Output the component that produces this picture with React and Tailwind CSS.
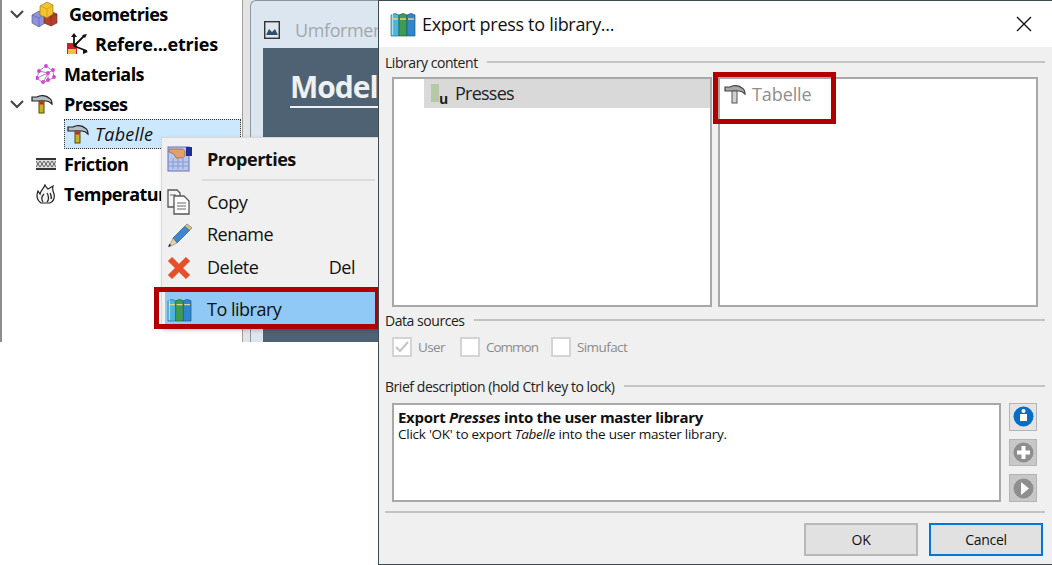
const FONT = { fontFamily: '"Open Sans", "Noto Sans", sans-serif' };

function Chevron() {
  return (
    <svg width="14" height="9" viewBox="0 0 14 9" fill="none" stroke="#444" strokeWidth="2">
      <path d="M1 1l6 6 6-6" />
    </svg>
  );
}

function Cubes() {
  return (
    <svg width="27" height="27" viewBox="0 0 27 27" className="block">
      <path d="M1 14l7-4 6 3v9l-6 4-7-4z" fill="#8f92e0" stroke="#555" strokeWidth=".6" />
      <path d="M1 14l7 3 6-4M8 17v9" fill="none" stroke="#5a5ca8" strokeWidth=".6" />
      <path d="M13 13l6-3 7 3v9l-6 3-7-3z" fill="#b5402c" stroke="#5a2a20" strokeWidth=".6" />
      <path d="M13 13l7 3 6-3M20 16v9" fill="none" stroke="#7a2a1c" strokeWidth=".6" />
      <path d="M9 5l7-4 6 3v9l-6 4-7-3z" fill="#f4c430" stroke="#8a6d10" strokeWidth=".6" />
      <path d="M9 5l7 3 6-4M16 8v9" fill="none" stroke="#c99a10" strokeWidth=".7" />
    </svg>
  );
}

function Axes() {
  return (
    <svg width="22" height="22" viewBox="0 0 22 22" className="block">
      <rect x="1" y="10" width="10" height="11" fill="#c8232c" />
      <rect x="2" y="16" width="8" height="5" fill="#e8c832" />
      <path d="M8 13L18 3M8 13V2M8 13l13 5" stroke="#111" strokeWidth="1.8" fill="none" />
      <path d="M8 0l-3 4h6zM21 1l-5 1 3 3zM22 19l-5-3v5z" fill="#111" />
    </svg>
  );
}

function Molecule() {
  return (
    <svg width="20" height="20" viewBox="0 0 20 20" className="block">
      <path d="M10 2L3 7 1 14l6 5 5-3 6-2-1-7zM3 7l9 2 5-3M12 9l-5 10M12 9v7M1 14l11-5" fill="none" stroke="#9a7aa8" strokeWidth=".9" />
      {[[10, 2], [3, 7], [17, 6], [12, 9], [1, 14], [7, 18], [12, 16], [18, 13]].map(([x, y], i) => (
        <circle key={i} cx={x} cy={y} r="1.9" fill="#d63fd6" />
      ))}
    </svg>
  );
}

function Hammer({ gray }) {
  return (
    <svg width="22" height="19" viewBox="0 0 22 19" className="block">
      <path d="M1 2h5c3-2 9-2 12 1 2 1 3 4 3 6-2-2-4-3-6-3H1z" fill={gray ? '#a8a8a8' : '#b4bec8'} stroke={gray ? '#444' : '#222'} strokeWidth="1.2" />
      <rect x="8" y="6" width="5" height="12" fill={gray ? '#d0d0d0' : '#c9b21e'} stroke={gray ? '#555' : '#4a4a10'} strokeWidth="1" />
      {!gray && <rect x="8.500" y="6.500" width="4" height="3" fill="#c8232c" />}
    </svg>
  );
}

function Friction() {
  return (
    <svg width="20" height="12" viewBox="0 0 20 12" className="block">
      <rect x="0" y="0" width="20" height="2" fill="#333" />
      <rect x="0" y="10" width="20" height="2" fill="#333" />
      <rect x="0" y="2" width="20" height="8" fill="#ddd" />
      <path d="M0 3l2 3 2-3 2 3 2-3 2 3 2-3 2 3 2-3 2 3 2-3M0 9l2-3 2 3 2-3 2 3 2-3 2 3 2-3 2 3 2-3 2 3" stroke="#444" strokeWidth=".8" fill="none" />
    </svg>
  );
}

function Flame() {
  return (
    <svg width="20" height="20" viewBox="0 0 20 20" fill="#f4f4f4" stroke="#222" strokeWidth="1.2" className="block">
      <path d="M5 19C1 16 0 12 2 7l2 3c1-4 4-6 5-9 1 2 2 3 3 4l5-3c-1 3 0 5 1 8 1 4-1 8-4 9z" />
      <path d="M7 18c-2-3-1-6 1-8M11 18c2-2 2-6 0-9M15 15c1-2 0-4-1-6" fill="none" />
    </svg>
  );
}

function Books({ size = 26 }) {
  return (
    <svg width={size} height={size} viewBox="0 0 26 26" className="block">
      <path d="M1 4q4-3 8 0v21H1z" fill="#4fb4dc" stroke="#1f6e9a" strokeWidth=".7" />
      <path d="M9 4q4-3 8 0v21H9z" fill="#3f9a55" stroke="#20673a" strokeWidth=".7" />
      <path d="M17 4q4-3 8 0v21h-8z" fill="#2f86cc" stroke="#1a5a94" strokeWidth=".7" />
      <path d="M2.500 3v21" stroke="#a8e0f0" strokeWidth="1.400" />
      <path d="M2 8h6M10 8h6M18 8h6" stroke="#e8d67a" strokeWidth="1.4" />
    </svg>
  );
}

function HandDoc() {
  return (
    <svg width="26" height="26" viewBox="0 0 26 26" className="block">
      <rect x="1" y="1" width="21" height="24" fill="#b8c8ec" stroke="#6a6fb8" strokeWidth="1" />
      <path d="M6 12v11M11 12v11M16 12v11M2 16h19M2 20h19" stroke="#8a9ad0" strokeWidth="1" />
      <path d="M2 3h12c2 0 4 1 4 3v3c0 2-2 3-4 3H9L7 8 2 6z" fill="#e0a070" stroke="#8a5a30" strokeWidth=".6" />
      <rect x="19" y="1" width="6" height="9" fill="#1c2f9c" />
    </svg>
  );
}

function CopyIcon() {
  return (
    <svg width="24" height="26" viewBox="0 0 24 26" fill="#f5f5f5" stroke="#555" strokeWidth="1.3" className="block">
      <path d="M1 1h9l3 3v14H1z" />
      <path d="M7 7h10l5 5v13H7z" fill="#fff" />
      <path d="M10 14h9M10 17h9M10 20h9M3 6h6" fill="none" strokeWidth=".9" />
    </svg>
  );
}

function Pencil() {
  return (
    <svg width="26" height="26" viewBox="0 0 26 26" className="block">
      <path d="M6 16L20 2l5 4-15 15z" fill="#3f86cc" stroke="#1e5a94" strokeWidth=".7" />
      <path d="M20 2l5 4-2 2-5-4z" fill="#e8c060" />
      <path d="M6 16l4 5-8 4z" fill="#e8d0a8" stroke="#666" strokeWidth=".5" />
      <path d="M1 25l3-1.500-1.500-2z" fill="#222" />
    </svg>
  );
}

function RedX() {
  return (
    <svg width="24" height="24" viewBox="0 0 24 24" fill="none" stroke="#e5502a" strokeWidth="6" className="block">
      <path d="M3 3l18 18M21 3L3 21" />
    </svg>
  );
}

function RoundBtn({ color, children, disabled }) {
  return (
    <div className={`w-[28px] h-[28px] flex items-center justify-center border border-[#b4b4b4] ${disabled ? 'bg-[#c8c8c8]' : 'bg-[#e4e4e4]'}`}>
      <svg width="21" height="21" viewBox="0 0 21 21">
        <circle cx="10.5" cy="10.5" r="10" fill={color} />
        {children}
      </svg>
    </div>
  );
}

function TreeRow({ indent, chevron, icon, label, labelClass = 'tracking-[-0.6px]' }) {
  return (
    <div className="h-[30px] flex items-center whitespace-nowrap" style={{ paddingLeft: indent }}>
      {chevron && <span className="w-[21px] flex items-center"><Chevron /></span>}
      {icon}
      <span className={`font-bold text-[18px] text-black ${labelClass}`}>{label}</span>
    </div>
  );
}

function SectionTitle({ title }) {
  return (
    <div className="flex items-center gap-[9px] h-[16px] text-[14px] text-[#222] tracking-[-0.45px] whitespace-nowrap">
      <span>{title}</span>
      <span className="flex-1 h-[2px] bg-[#c4c4c4]" />
    </div>
  );
}

function Check({ label, checked, className, labelClass = 'tracking-[-0.6px]' }) {
  return (
    <div className={`flex items-center gap-[6px] text-[13.5px] text-[#8c8c8c] ${className}`}>
      <span className="w-[20px] h-[20px] bg-white border-2 border-[#d4d4d4] flex items-center justify-center">
        {checked && (
          <svg width="14" height="12" viewBox="0 0 14 12" fill="none" stroke="#c4c4c4" strokeWidth="2">
            <path d="M1 6l4 4 8-9" />
          </svg>
        )}
      </span>
      <span className={labelClass}>{label}</span>
    </div>
  );
}

function MenuItem({ icon, label, shortcut, bold, className }) {
  return (
    <div className={`flex items-center text-[18px] tracking-[-0.5px] text-[#111] ${className}`}>
      <span className="w-[40px] flex items-center">{icon}</span>
      <span className={`flex-1 ${bold ? 'font-bold' : ''}`}>{label}</span>
      {shortcut && <span className="mr-[24px]">{shortcut}</span>}
    </div>
  );
}

function App() {
  return (
    <div style={FONT} className="relative w-[1052px] h-[565px] bg-white overflow-hidden flex items-start">
      {/* model tree and window behind the dialog */}
      <div className="relative w-[378px] h-[342px] flex shrink-0">
        <div className="w-[243px] h-full border-l-2 border-r border-l-[#8e8e8e] border-r-[#a0a0a0] bg-white">
          <div className="-mt-px">
            <TreeRow indent={8} chevron icon={<span className="w-[38px]"><Cubes /></span>} label="Geometries" labelClass="tracking-[-0.55px]" />
            <TreeRow indent={64} icon={<span className="w-[29px]"><Axes /></span>} label="Refere...etries" labelClass="tracking-[-0.2px]" />
            <TreeRow indent={34} icon={<span className="w-[28px]"><Molecule /></span>} label="Materials" />
            <TreeRow indent={8} chevron icon={<span className="w-[33px]"><Hammer /></span>} label="Presses" />
            <div className="ml-[62px] w-[177px] h-[30px] bg-[#cce8ff] border border-dotted border-[#333] flex items-center pl-[2px]">
              <span className="w-[28px]"><Hammer /></span>
              <span className="italic text-[18px] tracking-[0.25px] text-[#111]">Tabelle</span>
            </div>
            <TreeRow indent={34} icon={<span className="w-[28px]"><Friction /></span>} label="Friction" />
            <TreeRow indent={34} icon={<span className="w-[28px]"><Flame /></span>} label="Temperature" />
          </div>
        </div>

        <div className="flex-1 min-w-0 h-full bg-[#e4e4e4] pl-[7px]">
          <div className="h-full rounded-tl-[6px] border-l border-t border-[#8a97a3] bg-[#dbe6f0] pl-[12px] overflow-hidden">
            <div className="h-[47px] flex items-center gap-[15px] pt-[11px] pl-px whitespace-nowrap">
              <svg width="16" height="18" viewBox="0 0 16 18" className="shrink-0">
                <rect x=".7" y=".7" width="14.600" height="16.600" fill="#dfe6ee" stroke="#333" strokeWidth="1.400" />
                <path d="M2 14l3-6 3 3 3-3 3 6z" fill="#2f4f72" />
              </svg>
              <span className="text-[18px] text-[#a4a8ac] tracking-[-0.4px]">Umformer</span>
            </div>
            <div className="h-full bg-[#4f6273] pl-[27px] pt-[20px] whitespace-nowrap">
              <span className="inline-block text-[30px] leading-[38px] font-bold text-[#eef0f2] border-b-2 border-[#eef0f2] tracking-[-1px]">Model</span>
            </div>
          </div>
        </div>

        {/* context menu */}
        <div className="absolute left-[161px] top-[137px] w-[219px] h-[191px] bg-[#f0f0f0] border border-[#d8d8d8] shadow-[2px_2px_4px_rgba(0,0,0,0.25)] pt-[4px]">
          <MenuItem bold icon={<HandDoc />} label="Properties" className="h-[34px] pl-[5px]" />
          <div className="ml-[40px] mr-[4px] h-[2px] my-[3px] bg-[#dcdcdc]" />
          <MenuItem icon={<CopyIcon />} label="Copy" className="h-[32px] pl-[5px] mt-[5px]" />
          <MenuItem icon={<Pencil />} label="Rename" className="h-[33px] pl-[5px]" />
          <MenuItem icon={<RedX />} label="Delete" shortcut="Del" className="h-[33px] pl-[5px]" />
          <div className="h-[7px]" />
          <MenuItem icon={<Books size={25} />} label="To library" className="h-[33px] pt-[3px] ml-[3px] mr-[4px] pl-[2px] bg-[#90c8f6]" />
        </div>
        <div className="absolute left-[154px] top-[287px] w-[226px] h-[42px] border-[5px] border-[#b00000]" />
      </div>

      {/* export dialog */}
      <div className="relative w-[674px] h-[565px] shrink-0 flex flex-col border border-[#3c4a54] border-r-0 bg-white">
        <div className="h-[46px] flex items-center pl-[11px] pr-[20px] shrink-0">
          <Books />
          <span className="ml-[6px] flex-1 text-[18px] tracking-[-0.3px] text-[#111]">Export press to library...</span>
          <svg width="16" height="16" viewBox="0 0 16 16" stroke="#111" strokeWidth="1.4">
            <path d="M1 1l14 14M15 1L1 15" />
          </svg>
        </div>

        <div className="flex-1 bg-[#f0f0f0] pl-[6px] pr-[7px] flex flex-col">
          <div className="pt-[7px]"><SectionTitle title="Library content" /></div>
          <div className="flex gap-[6px] pl-[7px] mt-[7px] h-[230px]">
            <div className="w-[320px] bg-white border-2 border-[#a8a8a8] pl-[30px]">
              <div className="h-[29px] bg-[#d9d9d9] flex items-center pl-[7px]">
                <span className="relative w-[24px] h-[20px]">
                  <span className="absolute left-0 top-0 w-[8px] h-[18px] bg-[#b5c9a8]" />
                  <span className="absolute left-[8px] top-[4px] font-bold text-[14px] text-[#222]">u</span>
                </span>
                <span className="text-[18px] tracking-[-0.75px] text-[#222]">Presses</span>
              </div>
            </div>
            <div className="w-[320px] bg-white border-2 border-[#a8a8a8]">
              <div className="h-[31px] flex items-center pl-[4px] text-[18px] tracking-[-0.1px] text-[#8e8e8e]">
                <span className="w-[28px]"><Hammer gray /></span>
                Tabelle
              </div>
            </div>
          </div>

          <div className="mt-[5px]"><SectionTitle title="Data sources" /></div>
          <div className="flex items-center pl-[7px] mt-[9px] h-[20px]">
            <Check checked label="User" className="w-[68px]" />
            <Check label="Common" className="w-[91px]" labelClass="tracking-[-1px]" />
            <Check label="Simufact" />
          </div>

          <div className="mt-[21px]"><SectionTitle title="Brief description (hold Ctrl key to lock)" /></div>
          <div className="flex pl-[7px] mt-[9px] h-[99px]">
            <div className="w-[609px] bg-white border-2 border-[#a8a8a8] pl-[4px] pt-[3px] text-[#111]">
              <div className="text-[15px] leading-[18px] font-bold tracking-[-0.3px]">
                Export <i>Presses</i> into the user master library
              </div>
              <div className="text-[13.5px] leading-[17px] tracking-[-0.25px]">
                Click 'OK' to export <i>Tabelle</i> into the user master library.
              </div>
            </div>
            <div className="ml-[8px] flex flex-col gap-[8px]">
              <RoundBtn color="#0a6cc4">
                <circle cx="10.5" cy="5" r="2" fill="#fff" />
                <path d="M7 8h7v7H7z" fill="#fff" />
              </RoundBtn>
              <RoundBtn color="#8e8e8e" disabled>
                <path d="M8.5 4h4v4.5H17v4h-4.5V17h-4v-4.5H4v-4h4.500z" fill="#fff" />
              </RoundBtn>
              <RoundBtn color="#8e8e8e" disabled>
                <path d="M8 4l8 6.500-8 6.500z" fill="#fff" />
              </RoundBtn>
            </div>
          </div>

          <div className="mt-[9px] h-[2px] bg-[#c4c4c4]" />
          <div className="flex justify-end gap-[11px] mt-[10px] mr-[2px] text-[14px] tracking-[-0.3px] text-[#111]">
            <button className="w-[114px] h-[33px] bg-[#e1e1e1] border-2 border-[#b8b8b8]">OK</button>
            <button className="w-[114px] h-[33px] bg-[#e1e1e1] border-2 border-[#0078d7]">Cancel</button>
          </div>
        </div>

        <div className="absolute left-[334px] top-[71px] w-[123px] h-[52px] border-[5px] border-[#b00000]" />
      </div>
    </div>
  );
}

export default App;
